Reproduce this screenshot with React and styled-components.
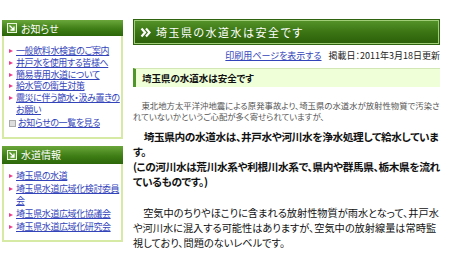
import React from "react";
import styled, { createGlobalStyle } from "styled-components";

const GlobalStyle = createGlobalStyle`
  body {
    margin: 0;
    background: #fff;
    overflow: hidden;
    font-family: "Noto Sans CJK JP", "Noto Sans", sans-serif;
    font-feature-settings: "palt";
  }
`;

const Page = styled.div`
  display: flex;
  align-items: flex-start;
  padding-top: 19px;
  width: 450px;
`;

const Sidebar = styled.div`
  width: 121px;
  margin-left: 2px;
  margin-top: 1px;
  display: flex;
  flex-direction: column;
  gap: 7px;
`;

const Box = styled.div`
  border: 2px solid #d6eaa6;
  border-top: none;
  background: #fff;
`;

const BoxHeader = styled.div`
  height: ${(p) => p.$h || "16px"};
  margin: 0 -2px;
  display: flex;
  align-items: center;
  gap: 4px;
  padding-left: 5px;
  background: linear-gradient(#6aa63a, #3f7e16 55%, #2c6609);
  color: #fff;
  font-size: 10px;
`;

const List = styled.ul`
  list-style: none;
  margin: 0;
  padding: ${(p) => p.$pad || "9px 1px 7px 3px"};
`;

const Item = styled.li`
  display: flex;
  align-items: flex-start;
  font-size: 9px;
  letter-spacing: -0.4px;
  line-height: ${(p) => p.$lh || "11.8px"};
`;

const Bullet = styled.span`
  flex: none;
  width: 0;
  height: 0;
  margin: ${(p) => p.$top || "4px"} 3px 0 2px;
  border-left: 4px solid #ec3d8c;
  border-top: 2.5px solid transparent;
  border-bottom: 2.5px solid transparent;
`;

const GrayBox = styled.span`
  flex: none;
  width: 5px;
  height: 5px;
  margin: 4.5px 2px 0 2px;
  border: 1px solid #aaa;
  background: #ddd;
`;

const Link = styled.a`
  color: #3344bb;
  text-decoration: underline;
  cursor: pointer;
`;

const Main = styled.div`
  width: 307px;
  margin-left: 10px;
  display: flex;
  flex-direction: column;
`;

const TitleBar = styled.div`
  height: 26px;
  box-sizing: border-box;
  display: flex;
  align-items: center;
  gap: 5px;
  padding-left: 7px;
  background: linear-gradient(#58972c, #3b7514 50%, #2a5c08);
  box-shadow: inset 0 0 0 1px #2f6310, inset 0 0 0 2px #9fcd78;
  color: #fff;
  font-size: 11px;
  letter-spacing: 1.5px;
`;

const MetaRow = styled.div`
  display: flex;
  justify-content: flex-end;
  align-items: center;
  gap: 7px;
  margin-top: 4px;
  height: 12px;
  font-size: 9px;
  color: #222;
  white-space: nowrap;
`;

const SubHead = styled.div`
  margin-top: 7px;
  height: 19px;
  box-sizing: border-box;
  display: flex;
  align-items: center;
  padding-left: 6px;
  background: #efffd8;
  border-left: 3px solid #4f962a;
  border-top: 1px solid #d3e6b6;
  font-size: 9.5px;
  font-weight: bold;
  color: #111;
`;

const Para = styled.p`
  margin: ${(p) => p.$mt} -3px 0 0;
  text-indent: 1em;
  font-size: ${(p) => p.$size};
  line-height: ${(p) => p.$lh};
  letter-spacing: ${(p) => p.$ls || "0"};
  font-weight: ${(p) => (p.$bold ? "bold" : "normal")};
  color: ${(p) => p.$color || "#111"};
`;

function CornerIcon() {
  return (
    <svg width="10" height="10" viewBox="0 0 10 10">
      <rect x="0.5" y="0.5" width="9" height="9" fill="#5d9a32" stroke="#e9f5dc" />
      <path d="M2.5 2.5 L7 7 M7 3.5 V7 H3.5" stroke="#fff" strokeWidth="1.3" fill="none" />
    </svg>
  );
}

function Chevrons() {
  return (
    <svg width="11" height="11" viewBox="0 0 11 11">
      <path d="M1.5 1.5 L5 5.5 L1.5 9.5 M6 1.5 L9.5 5.5 L6 9.5" stroke="#fff" strokeWidth="2.2" fill="none" />
    </svg>
  );
}

const news = [
  "一般飲料水検査のご案内",
  "井戸水を使用する皆様へ",
  "簡易専用水道について",
  "給水管の衛生対策",
  "震災に伴う節水・汲み置きのお願い",
];

const waterInfo = [
  "埼玉県の水道",
  "埼玉県水道広域化検討委員会",
  "埼玉県水道広域化協議会",
  "埼玉県水道広域化研究会",
];

export default function App() {
  return (
    <>
      <GlobalStyle />
      <Page>
        <Sidebar>
          <Box>
            <BoxHeader>
              <CornerIcon />
              お知らせ
            </BoxHeader>
            <List>
              {news.map((n) => (
                <Item key={n}>
                  <Bullet />
                  <Link>{n}</Link>
                </Item>
              ))}
              <Item $lh="14px">
                <GrayBox />
                <Link>お知らせの一覧を見る</Link>
              </Item>
            </List>
          </Box>
          <Box>
            <BoxHeader $h="18px">
              <CornerIcon />
              水道情報
            </BoxHeader>
            <List $pad="6px 1px 6px 3px">
              {waterInfo.map((n) => (
                <Item key={n} $lh="12.8px">
                  <Bullet $top="4.5px" />
                  <Link>{n}</Link>
                </Item>
              ))}
            </List>
          </Box>
        </Sidebar>
        <Main>
          <TitleBar>
            <Chevrons />
            埼玉県の水道水は安全です
          </TitleBar>
          <MetaRow>
            <Link>印刷用ページを表示する</Link>
            <span>掲載日：2011年3月18日更新</span>
          </MetaRow>
          <SubHead>埼玉県の水道水は安全です</SubHead>
          <Para $mt="13px" $size="8.4px" $lh="10.5px" $color="#555">
            東北地方太平洋沖地震による原発事故より、埼玉県の水道水が放射性物質で汚染されていないかというご心配が多く寄せられていますが、
          </Para>
          <Para $mt="8px" $size="10.7px" $lh="15px" $ls="-0.4px" $bold>
            埼玉県内の水道水は、井戸水や河川水を浄水処理して給水していま
            <br />
            す。
            <br />
            (この河川水は荒川水系や利根川水系で、県内や群馬県、栃木県を流れているものです。)
          </Para>
          <Para $mt="16px" $size="10.2px" $lh="15px">
            空気中のちりやほこりに含まれる放射性物質が雨水となって、井戸水や河川水に混入する可能性はありますが、空気中の放射線量は常時監視しており、問題のないレベルです。
          </Para>
        </Main>
      </Page>
    </>
  );
}
